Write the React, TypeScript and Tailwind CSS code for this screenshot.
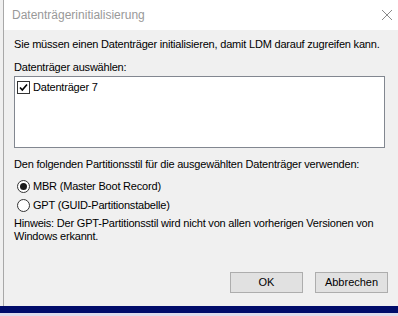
import React from 'react';

const font = { fontFamily: '"Liberation Sans", Arial, sans-serif' };

const CheckBox = () => (
  <span className="w-[13px] h-[13px] border border-[#333] bg-white flex items-center justify-center shrink-0">
    <svg width="11" height="11" viewBox="0 0 11 11">
      <path d="M2 5.5 L4.3 8 L9 2.5" fill="none" stroke="#000" strokeWidth="1.6" />
    </svg>
  </span>
);

const Radio = ({ checked }: { checked?: boolean }) => (
  <span className="w-[13px] h-[13px] rounded-full border border-[#333] bg-white flex items-center justify-center shrink-0">
    {checked && <span className="w-[7px] h-[7px] rounded-full bg-[#1a1a1a]" />}
  </span>
);

const App = () => {
  return (
    <div className="w-[398px] h-[316px] flex flex-col bg-[#f0f0f0] overflow-hidden text-black" style={font}>
      <div className="flex flex-1">
        {/* Fensterrand links */}
        <div className="w-[3px] bg-[#f0f0f0] border-r border-[#a8a8a8] box-content" />
        <div className="flex-1 flex flex-col">
          {/* Titelleiste */}
          <div className="h-[30px] bg-white flex items-center justify-between pl-[8px] pr-[5px]">
            <span className="text-[12px] text-[#999999]">Datenträgerinitialisierung</span>
            <svg width="12" height="12" viewBox="0 0 12 12" className="mb-[1px]">
              <path d="M1 1 L11 11 M11 1 L1 11" stroke="#8a8a8a" strokeWidth="1" />
            </svg>
          </div>
          {/* Inhalt */}
          <div className="flex-1 flex flex-col pl-[10px] pt-[8px] text-[11px] leading-[13px] tracking-[-0.2px]">
            <div>Sie müssen einen Datenträger initialisieren, damit LDM darauf zugreifen kann.</div>
            <div className="mt-[10px]">Datenträger auswählen:</div>
            <div className="mt-[2px] w-[371px] h-[72px] bg-white border border-[#828790] pl-[2px] pt-[4px]">
              <div className="flex items-center gap-[3px] h-[13px]">
                <CheckBox />
                <span>Datenträger 7</span>
              </div>
            </div>
            <div className="mt-[10px]">Den folgenden Partitionsstil für die ausgewählten Datenträger verwenden:</div>
            <div className="flex items-center gap-[3px] h-[19px] mt-[6px] pl-[3px]">
              <Radio checked />
              <span>MBR (Master Boot Record)</span>
            </div>
            <div className="flex items-center gap-[3px] h-[19px] pl-[3px]">
              <Radio />
              <span>GPT (GUID-Partitionstabelle)</span>
            </div>
            <div className="mt-[2px]">
              Hinweis: Der GPT-Partitionsstil wird nicht von allen vorherigen Versionen von
              <br />
              Windows erkannt.
            </div>
            <div className="flex justify-end gap-[12px] mt-[29px] pr-[10px] tracking-normal">
              <button className="w-[73px] h-[21px] bg-[#e1e1e1] border border-[#adadad] text-[11px]">OK</button>
              <button className="w-[73px] h-[21px] bg-[#e1e1e1] border border-[#adadad] text-[11px]">Abbrechen</button>
            </div>
          </div>
        </div>
      </div>
      <div className="h-[7px] bg-[#000c6a]" />
      <div className="h-[3px] bg-[#dcdcec]" />
    </div>
  );
};

export default App;
